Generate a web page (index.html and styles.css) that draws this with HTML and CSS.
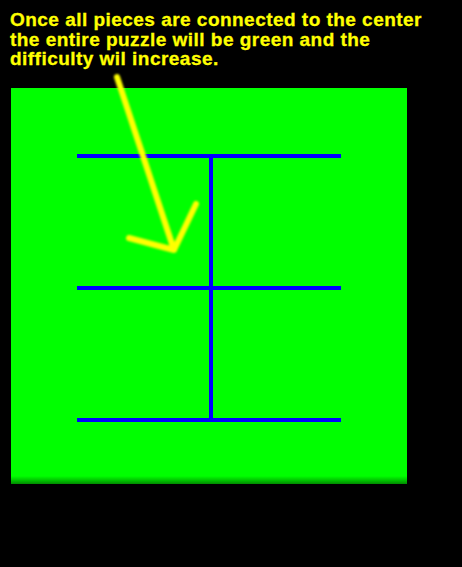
FILE: index.html
```html
<!DOCTYPE html>
<html>
<head>
<meta charset="utf-8">
<link rel="stylesheet" href="styles.css">
</head>
<body>
<p class="msg">Once all pieces are connected to the center<br>the entire puzzle will be green and the<br>difficulty wil increase.</p>
<div class="board">
  <svg class="lines" width="396" height="396" viewBox="0 0 396 396">
    <rect x="66" y="66" width="264" height="4" fill="#0000ff"/>
    <rect x="66" y="198" width="264" height="4" fill="#0000ff"/>
    <rect x="66" y="330" width="264" height="4" fill="#0000ff"/>
    <rect x="198" y="66" width="4" height="268" fill="#0000ff"/>
  </svg>
</div>
<svg class="arrow" width="462" height="567" viewBox="0 0 462 567">
  <defs>
    <filter id="soft" x="-20%" y="-20%" width="140%" height="140%">
      <feGaussianBlur stdDeviation="0.8"/>
    </filter>
  </defs>
  <g filter="url(#soft)" fill="none" stroke="#ffff00" stroke-linecap="round" stroke-linejoin="round">
    <path d="M117 77 L174 250 M129 238 L174 250 L196 204" stroke-width="6"/>
  </g>
</svg>
</body>
</html>
```
FILE: styles.css
```css
html, body {
  margin: 0;
  padding: 0;
  background: #000;
}
body {
  width: 462px;
  height: 567px;
  overflow: hidden;
  position: relative;
}
.msg {
  margin: 0;
  padding: 10px 0 0 10px;
  white-space: nowrap;
  font-family: "Liberation Sans", Arial, sans-serif;
  font-weight: bold;
  font-size: 19px;
  line-height: 19.5px;
  letter-spacing: 0.47px;
  -webkit-text-stroke: 0.3px #ffff00;
  color: #ffff00;
}
.board {
  margin: 19.5px 0 0 11px;
  width: 396px;
  height: 396px;
  background: linear-gradient(to bottom, #00ff00 0, #00ff00 388px, #00c800 392px, #008a00 396px);
}
.lines {
  display: block;
}
.arrow {
  position: absolute;
  left: 0;
  top: 0;
  pointer-events: none;
}
```
